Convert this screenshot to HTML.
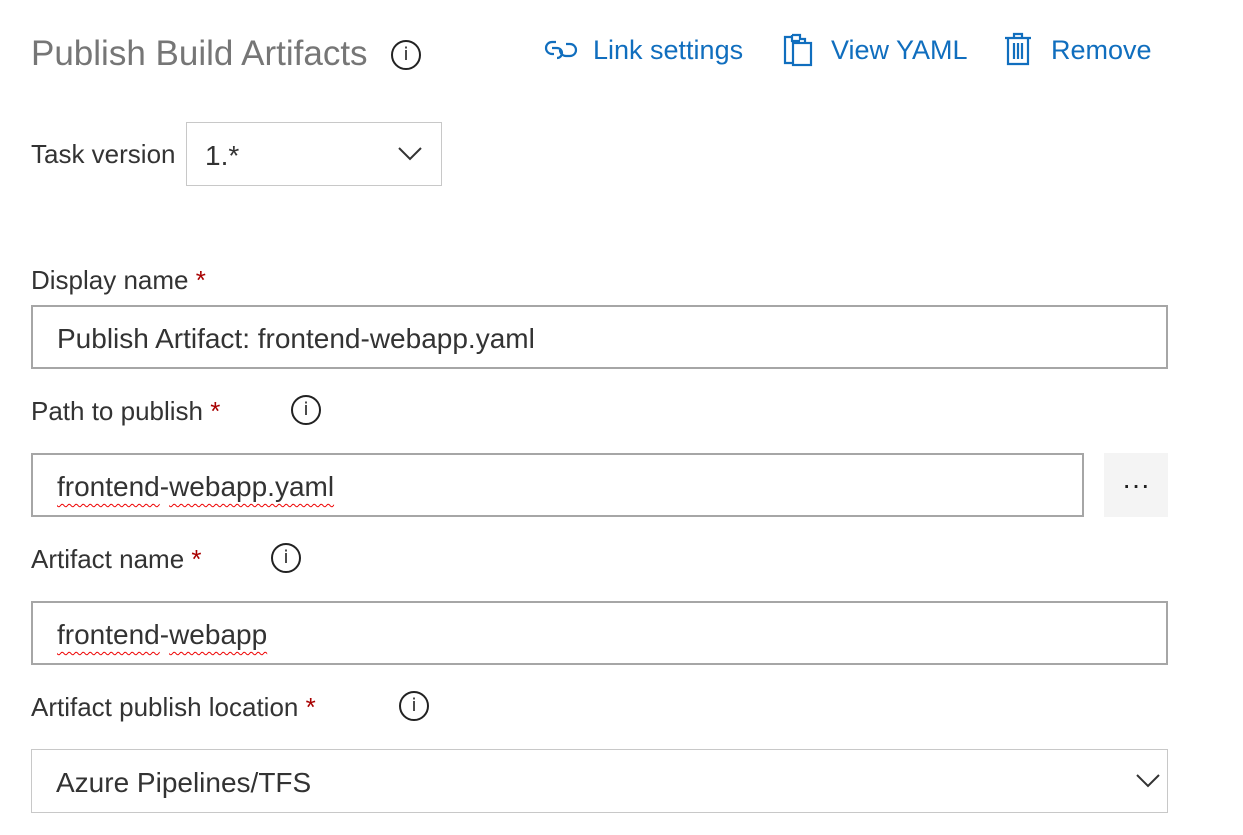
<!DOCTYPE html>
<html><head><style>
*{box-sizing:border-box;margin:0;padding:0}
body{width:1243px;height:835px;background:#fff;font-family:"Liberation Sans",sans-serif;color:#333;position:relative;overflow:hidden}
.a{position:absolute;white-space:nowrap}
.lbl{font-size:26px;color:#333;line-height:30px}
.req{color:#a80000}
.box{position:absolute;border:2px solid #a6a6a6;background:#fff;font-size:28px;line-height:30px;padding-left:24px;padding-top:4px;display:flex;align-items:center}
.sq{text-decoration:underline wavy #e00;text-underline-offset:7px;text-decoration-thickness:1px}
.info{position:absolute;width:30px;height:30px;border:2px solid #222;border-radius:50%;font-size:18px;font-family:"DejaVu Sans",sans-serif;text-align:center;line-height:26px;color:#222}
.link{position:absolute;color:#106ebe;font-size:27px;line-height:30px;white-space:nowrap}
</style></head><body>
<div class="a" style="left:31px;top:34px;font-size:35px;color:#767676;line-height:40px">Publish Build Artifacts</div>
<div class="info" style="left:391px;top:40px">i</div>

<svg class="a" style="left:544px;top:37px" width="34" height="26" viewBox="0 0 34 26" fill="none" stroke="#106ebe" stroke-width="2.2"><path d="M12 5H8a6 6 0 0 0 0 12h2"/><path d="M8 11h5a5 5 0 0 1 0 10"/><path d="M22 7h4a6 6 0 0 1 0 12h-4a6 6 0 0 1-6-6"/></svg>
<div class="link" style="left:593px;top:35px">Link settings</div>
<svg class="a" style="left:782px;top:33px" width="32" height="34" viewBox="0 0 32 34" fill="none" stroke="#106ebe" stroke-width="2.2"><path d="M10 4h-7v26h8"/><path d="M10 2h8v4h5v4"/><path d="M10 2v6h8"/><rect x="11" y="10" width="18" height="22"/></svg>
<div class="link" style="left:831px;top:35px">View YAML</div>
<svg class="a" style="left:1003px;top:32px" width="30" height="34" viewBox="0 0 30 34" fill="none" stroke="#106ebe" stroke-width="2.2"><path d="M2 6h26M11 6V2h8v4"/><path d="M5 6v26h20V6"/><path d="M11 11v16M15 11v16M19 11v16"/></svg>
<div class="link" style="left:1051px;top:35px">Remove</div>

<div class="a lbl" style="left:31px;top:139px">Task version</div>
<div class="box" style="left:186px;top:122px;width:256px;height:64px;border:1px solid #c8c8c8;padding-left:18px">1.*</div>
<svg class="a" style="left:397px;top:145px" width="26" height="16" viewBox="0 0 26 16" fill="none" stroke="#333" stroke-width="2"><path d="M2 3l11 11 11-11"/></svg>

<div class="a lbl" style="left:31px;top:265px">Display name <span class="req">*</span></div>
<div class="box" style="left:31px;top:305px;width:1137px;height:64px">Publish Artifact: frontend-webapp.yaml</div>

<div class="a lbl" style="left:31px;top:396px">Path to publish <span class="req">*</span></div>
<div class="info" style="left:291px;top:395px">i</div>
<div class="box" style="left:31px;top:453px;width:1053px;height:64px"><span class="sq">frontend</span>-<span class="sq">webapp.yaml</span></div>
<div class="a" style="left:1104px;top:453px;width:64px;height:64px;background:#f4f4f4;text-align:center;line-height:64px;font-size:28px;color:#222">···</div>

<div class="a lbl" style="left:31px;top:544px">Artifact name <span class="req">*</span></div>
<div class="info" style="left:271px;top:543px">i</div>
<div class="box" style="left:31px;top:601px;width:1137px;height:64px"><span class="sq">frontend</span>-<span class="sq">webapp</span></div>

<div class="a lbl" style="left:31px;top:692px">Artifact publish location <span class="req">*</span></div>
<div class="info" style="left:399px;top:691px">i</div>
<div class="box" style="left:31px;top:749px;width:1137px;height:64px;border:1px solid #c8c8c8">Azure Pipelines/TFS</div>
<svg class="a" style="left:1135px;top:772px" width="26" height="16" viewBox="0 0 26 16" fill="none" stroke="#333" stroke-width="2"><path d="M2 3l11 11 11-11"/></svg>
</body></html>
